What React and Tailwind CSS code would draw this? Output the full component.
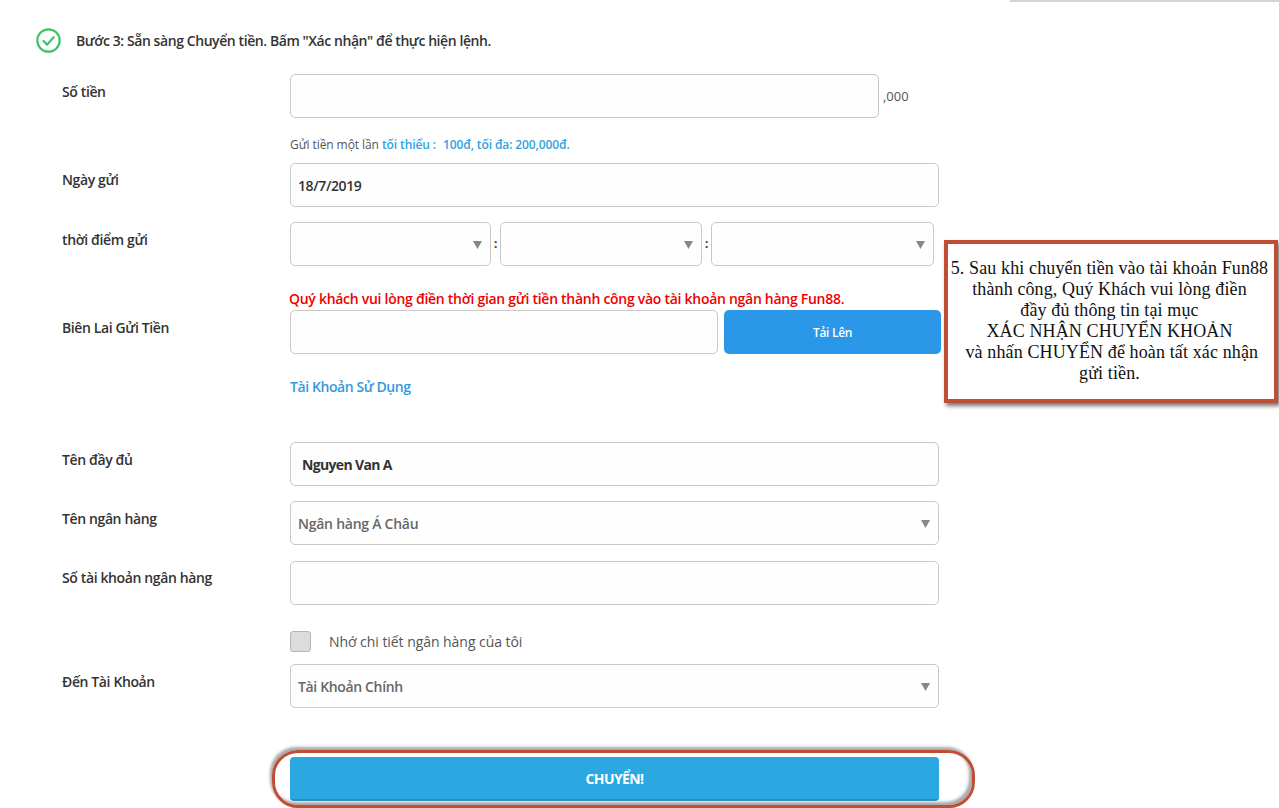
const FF = "font-['Open_Sans',sans-serif]";

function Caret({ gray = "#888" }) {
  return (
    <svg width="9" height="8" viewBox="0 0 9 8" className="absolute right-[8px] top-[18px]">
      <path d="M0 0h9L4.5 8z" fill={gray} />
    </svg>
  );
}

function Box({ className = "", children }) {
  return (
    <div className={`relative h-[44px] rounded-[5px] border border-[#c8c8c8] bg-[#fefefe] flex items-center ${className}`}>
      {children}
    </div>
  );
}

function Row({ label, top, labelTop = "pt-[8px]", children }) {
  return (
    <div className={`flex pl-[62px] ${top}`}>
      <div className={`w-[228px] shrink-0 text-[14px] leading-[20px] tracking-[-0.38px] text-[#333] font-semibold ${labelTop}`}>{label}</div>
      <div className="w-[660px]">{children}</div>
    </div>
  );
}

export default function App() {
  return (
    <div className={`relative h-[808px] w-[1279px] overflow-hidden bg-white ${FF}`}>
      <div className="absolute right-0 top-0 h-[2px] w-[269px] bg-[#d4d4d4]" />

      <div className="flex items-center pl-[36px] pt-[28px]">
        <svg width="25" height="25" viewBox="0 0 25 25" className="shrink-0">
          <circle cx="12.5" cy="12.5" r="11.2" fill="none" stroke="#3cc466" strokeWidth="2.2" />
          <path d="M7.5 13l3.6 3.6 6.6-7.4" fill="none" stroke="#3cc466" strokeWidth="2.2" strokeLinecap="round" strokeLinejoin="round" />
        </svg>
        <span className="ml-[15px] text-[14px] font-semibold leading-[25px] tracking-[-0.42px] text-[#333]">
          Bước 3: Sẵn sàng Chuyển tiền. Bấm "Xác nhận" để thực hiện lệnh.
        </span>
      </div>

      <Row label="Số tiền" top="mt-[21px]">
        <div className="flex items-center">
          <Box className="w-[589px]" />
          <span className="ml-[4px] mt-[2px] text-[13px] tracking-[0px] text-[#555]">,000</span>
        </div>
        <div className="mt-[17px] text-[12px] leading-[20px] tracking-[-0.08px] text-[#555]">
          Gửi tiền một lần{" "}
          <span className="font-semibold tracking-[-0.1px] text-[#33a1de]">tối thiểu :&nbsp;&nbsp;</span>
          <span className="ml-px font-semibold tracking-[-0.12px] text-[#33a1de]">100đ, tối đa: 200,000đ.</span>
        </div>
      </Row>

      <Row label="Ngày gửi" top="mt-[8px]" labelTop="pt-[7px]">
        <Box className="w-[649px] pl-[7px] text-[14px] font-semibold tracking-[-0.4px] text-[#333]">18/7/2019</Box>
      </Row>

      <Row label="thời điểm gửi" top="mt-[15px]">
        <div className="flex items-center">
          <Box className="w-[201px]"><Caret /></Box>
          <span className="w-[9px] text-center text-[13px] font-bold text-[#444]">:</span>
          <Box className="w-[202px]"><Caret /></Box>
          <span className="w-[9px] text-center text-[13px] font-bold text-[#444]">:</span>
          <Box className="w-[223px]"><Caret /></Box>
        </div>
      </Row>

      <Row label="Biên Lai Gửi Tiền" top="mt-[23px]" labelTop="pt-[29px]">
        <div className="-ml-px h-[21px] text-[14px] font-semibold leading-[20px] tracking-[-0.28px] text-[#f00000]">
          Quý khách vui lòng điền thời gian gửi tiền thành công vào tài khoản ngân hàng Fun88.
        </div>
        <div className="flex">
          <Box className="w-[428px]" />
          <div className="ml-[6px] flex h-[44px] w-[217px] items-center justify-center rounded-[5px] bg-[#2a97e8] pt-[2px] text-[12px] font-semibold tracking-[-0.3px] text-white">
            Tải Lên
          </div>
        </div>
        <div className="mt-[22px] text-[14px] font-semibold leading-[22px] tracking-[-0.42px] text-[#3399e0]">Tài Khoản Sử Dụng</div>
      </Row>

      <Row label="Tên đầy đủ" top="mt-[44px]">
        <Box className="w-[649px] pl-[11px] text-[14px] font-bold tracking-[-0.65px] text-[#333]">Nguyen Van A</Box>
      </Row>

      <Row label="Tên ngân hàng" top="mt-[15px]">
        <Box className="w-[649px] pl-[7px] text-[14px] font-semibold tracking-[-0.25px] text-[#666]">
          Ngân hàng Á Châu<Caret />
        </Box>
      </Row>

      <Row label="Số tài khoản ngân hàng" top="mt-[16px]" labelTop="pt-[7px]">
        <Box className="w-[649px]" />
      </Row>

      <div className="mt-[26px] flex items-center pl-[290px]">
        <div className="h-[21px] w-[21px] rounded-[3px] border border-[#b5b5b5] bg-[#dcdcdc]" />
        <span className="ml-[18px] text-[14px] leading-[21px] tracking-[-0.05px] text-[#555]">Nhớ chi tiết ngân hàng của tôi</span>
      </div>

      <Row label="Đến Tài Khoản" top="mt-[12px]">
        <Box className="w-[649px] pl-[7px] text-[14px] font-semibold tracking-[-0.35px] text-[#666]">
          Tài Khoản Chính<Caret />
        </Box>
      </Row>

      <div className="ml-[290px] mt-[49px] flex h-[44px] w-[649px] items-center justify-center rounded-[4px] border-b-[2px] border-[#2389bd] bg-[#2ba8e2] pt-[1px] text-[14px] font-bold tracking-[-0.6px] text-white">
        CHUYỂN!
      </div>

      <div className="absolute left-[272px] top-[750px] h-[58px] w-[703px] rounded-[26px] border-[3px] border-[#bf4e37] shadow-[-2px_-3px_3px_#a8a8a8,inset_-3px_-3px_3px_#a8a8a8]" />

      <div className="absolute left-[944px] top-[240px] flex h-[163px] w-[334px] flex-col items-center justify-center border-[4px] border-[#bf4e37] bg-white pb-[1px] pr-[3px] text-center font-['Liberation_Serif',serif] text-[18px] leading-[21px] tracking-[0.12px] text-[#111] shadow-[2px_3px_4px_#777]">
        <div className="whitespace-nowrap">5. Sau khi chuyển tiền vào tài khoản Fun88</div>
        <div className="whitespace-nowrap">thành công, Quý Khách vui lòng điền</div>
        <div className="whitespace-nowrap">đầy đủ thông tin tại mục</div>
        <div className="whitespace-nowrap">XÁC NHẬN CHUYỂN KHOẢN</div>
        <div className="whitespace-nowrap">&nbsp;và nhấn CHUYỂN để hoàn tất xác nhận</div>
        <div className="whitespace-nowrap">gửi tiền.</div>
      </div>
    </div>
  );
}
